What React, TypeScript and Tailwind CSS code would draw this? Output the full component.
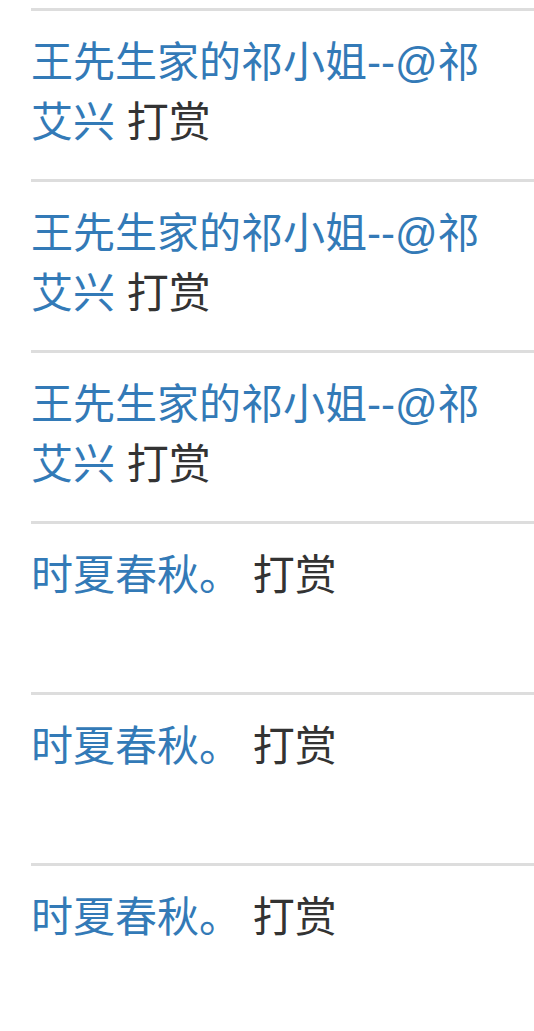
export default function App() {
  const items = [
    "王先生家的祁小姐--@祁艾兴",
    "王先生家的祁小姐--@祁艾兴",
    "王先生家的祁小姐--@祁艾兴",
    "时夏春秋。",
    "时夏春秋。",
    "时夏春秋。",
  ];
  return (
    <div className="min-h-screen bg-white pt-2 pl-[31px] font-['Liberation_Sans','Noto_Sans_CJK_SC',sans-serif]">
      <ul>
        {items.map((name, i) => (
          <li key={i} className="h-[171px] border-t-[3px] border-[#dddddd] pt-[22px] pr-[40px] text-[42px] leading-[60px] text-[#333333]">
            <a className="text-[#337ab7]">{name}</a> 打赏
          </li>
        ))}
      </ul>
    </div>
  );
}
